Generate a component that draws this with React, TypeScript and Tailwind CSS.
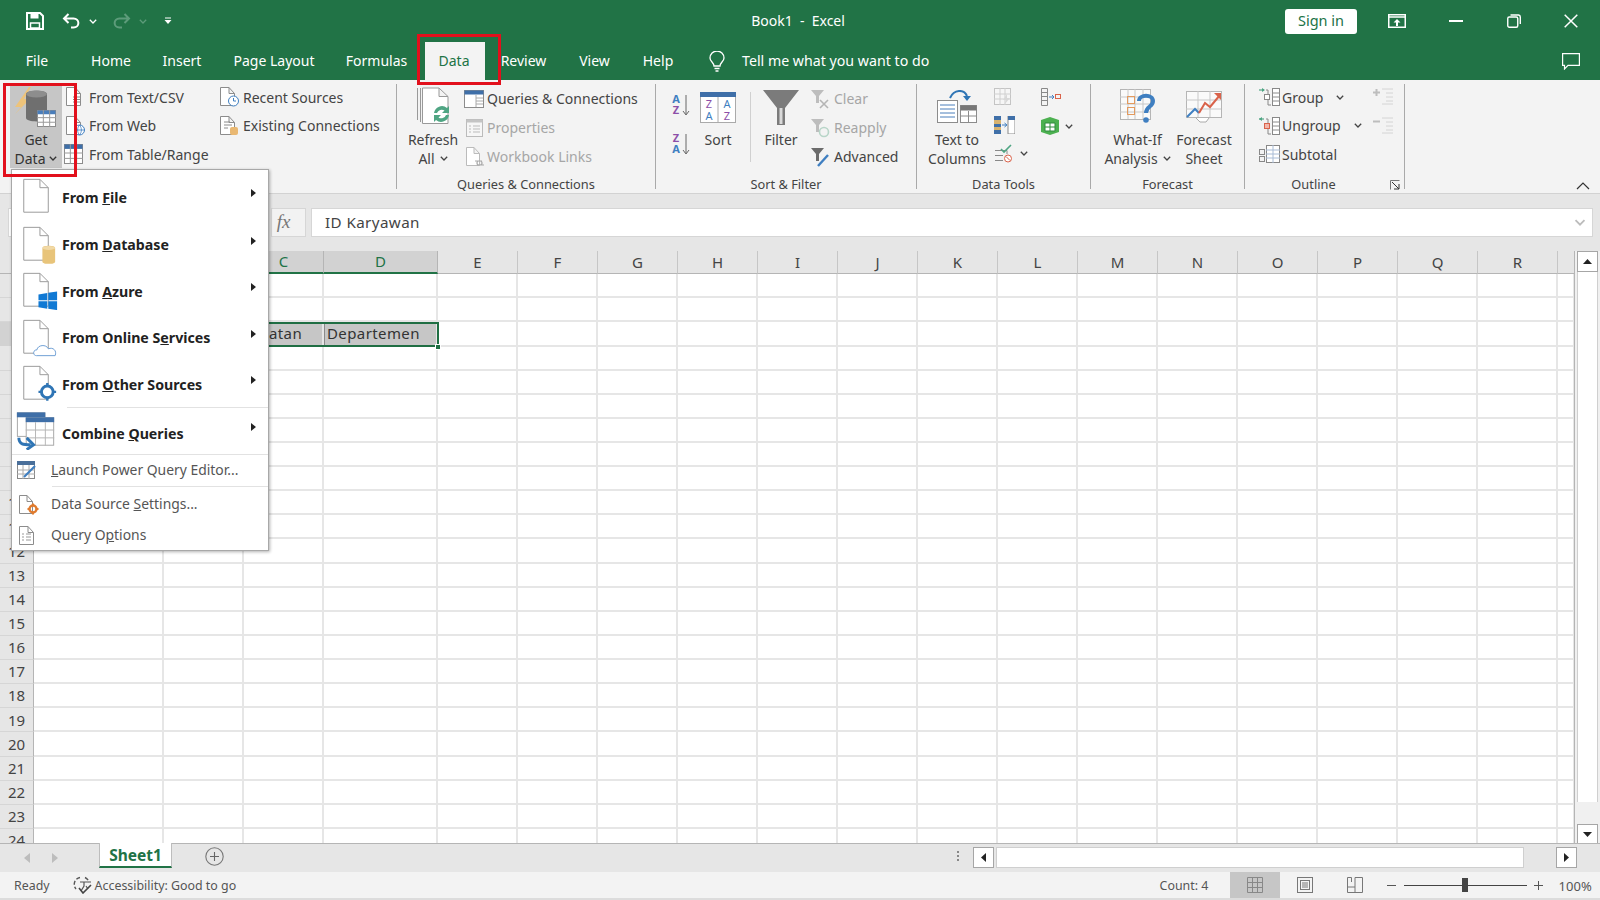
import type { ReactNode } from 'react';

const FONT = "font-['Noto_Sans','Open_Sans',sans-serif]";
const COLS = 'grid grid-cols-[34px_130px_80px_80px_114px_repeat(14,80px)_17px]';
const HEADS = ['', 'A', 'B', 'C', 'D', 'E', 'F', 'G', 'H', 'I', 'J', 'K', 'L', 'M', 'N', 'O', 'P', 'Q', 'R', ''];
const ROWS = Array.from({ length: 24 }, (_, i) => i + 1);

function Chevron({ className = '', color = '#444' }: { className?: string; color?: string }) {
  return (
    <svg width="8" height="5" viewBox="0 0 8 5" className={className}>
      <path d="M0.8 0.8L4 4L7.2 0.8" fill="none" stroke={color} strokeWidth="1.3" />
    </svg>
  );
}

function Arrow() {
  return (
    <svg width="5" height="8" viewBox="0 0 5 8" className="mt-[-8px] mr-[12px] shrink-0">
      <path d="M0 0L5 4L0 8Z" fill="#222" />
    </svg>
  );
}

function DocBase({ w = 18, h = 20, stroke = '#8c8c8c' }: { w?: number; h?: number; stroke?: string }) {
  return <path d={`M0.5 0.5H${w - 6}L${w - 0.5} 6.5V${h - 0.5}H0.5Z M${w - 6} 0.5V6.5H${w - 0.5}`} fill="#fff" stroke={stroke} strokeWidth="1" />;
}

function SmallDoc({ children }: { children?: ReactNode }) {
  return (
    <svg width="20" height="20" viewBox="0 0 20 20" className="shrink-0">
      <g transform="translate(0,0)"><DocBase w={15} h={19} /></g>
      {children}
    </svg>
  );
}

function MiniTable({ x = 0, y = 0, w = 18, h = 18, head = '#4a7ebb' }: { x?: number; y?: number; w?: number; h?: number; head?: string }) {
  const c = [w / 3, (2 * w) / 3];
  const r = [h * 0.45, h * 0.72];
  return (
    <g transform={`translate(${x},${y})`}>
      <rect x="0.5" y="0.5" width={w - 1} height={h - 1} fill="#fff" stroke="#8c8c8c" />
      <rect x="0.5" y="0.5" width={w - 1} height={h * 0.22} fill={head} />
      {c.map((v) => <path key={v} d={`M${v} 0V${h}`} stroke="#9a9a9a" />)}
      {r.map((v) => <path key={v} d={`M0 ${v}H${w}`} stroke="#9a9a9a" />)}
    </g>
  );
}

function GetDataIcon() {
  return (
    <svg width="50" height="44" viewBox="0 0 50 44" className="shrink-0">
      <path d="M19 2L5 22H11L5 29L20 14H14L21 2Z" fill="#edc37a" />
      <path d="M16 9C16 4.5 37 4.5 37 9V33C37 37.5 16 37.5 16 33Z" fill="#6f6f6f" />
      <ellipse cx="26.5" cy="9" rx="10.5" ry="3.5" fill="#8d8d8d" />
      <MiniTable x={27} y={25} w={19} h={17} head="#4a7ebb" />
    </svg>
  );
}

function SmallRow({ icon, label, gray, h = 'h-[28.5px]' }: { icon: ReactNode; label: string; gray?: boolean; h?: string }) {
  return (
    <div className={`flex items-center ${h}`}>
      <div className="w-[23px] flex items-center shrink-0">{icon}</div>
      <span className={`text-[14px] whitespace-nowrap ${gray ? 'text-[#a6a6a6]' : 'text-[#444]'}`}>{label}</span>
    </div>
  );
}

function Group({ w, label, pr, children }: { w: string; label: string; pr?: string; children: ReactNode }) {
  return (
    <div className={`flex flex-col h-[105px] shrink-0 border-r border-[#a9a9a9] ${w}`}>
      <div className="flex h-[91px] shrink-0">{children}</div>
      <div className={`h-[18px] shrink-0 text-center text-[12.8px] leading-[18px] text-[#444] whitespace-nowrap ${pr ?? ''}`}>{label}</div>
    </div>
  );
}

function BigButton({ w, icon, line1, line2, chevron }: { w: string; icon: ReactNode; line1: string; line2?: string; chevron?: boolean }) {
  return (
    <div className={`flex flex-col items-center shrink-0 ${w}`}>
      <div className="h-[46px] flex items-center justify-center">{icon}</div>
      <div className="text-[14px] leading-[19px] text-[#444] whitespace-nowrap text-center">{line1}</div>
      {line2 && (
        <div className="text-[14px] leading-[19px] text-[#444] whitespace-nowrap flex items-center gap-[5px]">
          {line2}
          {chevron && <Chevron />}
        </div>
      )}
    </div>
  );
}

function TitleBar() {
  return (
    <div className="grid grid-cols-[1fr_auto_1fr] items-center h-[42px] text-white">
      <div className="flex items-center pl-[26px]">
        <svg width="18" height="18" viewBox="0 0 18 18">
          <path d="M1 1H14L17 4V17H1Z" fill="none" stroke="#fff" strokeWidth="2" />
          <rect x="4.5" y="1.5" width="8" height="5" fill="#fff" />
          <rect x="4.5" y="11" width="9" height="5" fill="none" stroke="#fff" strokeWidth="1.5" />
        </svg>
        <svg width="19" height="18" viewBox="0 0 19 18" className="ml-[18px]">
          <path d="M6.5 2L2 6.5L6.5 11M2 6.5H11.5C18 6.5 18 15.5 11.5 15.5H9" fill="none" stroke="#fff" strokeWidth="2" />
        </svg>
        <Chevron className="ml-[8px]" color="#fff" />
        <svg width="19" height="18" viewBox="0 0 19 18" className="ml-[15px]">
          <path d="M12.5 2L17 6.5L12.5 11M17 6.5H7.5C1 6.5 1 15.5 7.5 15.5H10" fill="none" stroke="#5d9b7a" strokeWidth="2" />
        </svg>
        <Chevron className="ml-[8px]" color="#5d9b7a" />
        <svg width="8" height="8" viewBox="0 0 8 8" className="ml-[17px]">
          <path d="M1 1H7" stroke="#fff" /><path d="M0.5 3H7.5L4 7Z" fill="#fff" />
        </svg>
      </div>
      <div className="text-[14px] whitespace-pre pb-[2px] pr-[4px]">Book1  -  Excel</div>
      <div className="flex items-center justify-end">
        <div className="w-[72px] h-[25px] rounded-[3px] bg-white text-[#217346] text-[14.5px] flex items-center justify-center">Sign in</div>
        <svg width="18" height="14" viewBox="0 0 18 14" className="ml-[31px]">
          <rect x="0.75" y="0.75" width="16.5" height="12.5" fill="none" stroke="#fff" strokeWidth="1.5" />
          <path d="M1 3H17" stroke="#fff" strokeWidth="1.5" />
          <path d="M9 5L5.5 8.5H8V12H10V8.5H12.5Z" fill="#fff" />
        </svg>
        <div className="w-[14px] h-[1.5px] bg-white ml-[43px]" />
        <svg width="14" height="14" viewBox="0 0 14 14" className="ml-[44px]">
          <rect x="0.75" y="3" width="10" height="10.25" rx="1.5" fill="none" stroke="#fff" strokeWidth="1.4" />
          <path d="M3.5 1H11.5A2 2 0 0 1 13.3 3V10" fill="none" stroke="#fff" strokeWidth="1.4" />
        </svg>
        <svg width="14" height="14" viewBox="0 0 14 14" className="ml-[43px] mr-[22px]">
          <path d="M0.7 0.7L13.3 13.3M13.3 0.7L0.7 13.3" stroke="#fff" strokeWidth="1.5" />
        </svg>
      </div>
    </div>
  );
}

function TabsRow() {
  return (
    <div className="flex items-end h-[38px] text-white text-[14px]">
      <div className="w-[74px] h-[38px] flex items-center justify-center pb-[2px]">File</div>
      <div className="w-[74px] h-[38px] flex items-center justify-center pb-[2px]">Home</div>
      <div className="w-[68px] h-[38px] flex items-center justify-center pb-[2px]">Insert</div>
      <div className="w-[116px] h-[38px] flex items-center justify-center pb-[2px]">Page Layout</div>
      <div className="w-[89px] h-[38px] flex items-center justify-center pb-[2px]">Formulas</div>
      <div className="ml-[4px] w-[60px] h-[38px] flex items-center justify-center bg-[#f3f3f3] text-[#217346] pb-[2px] pr-[2px]">Data</div>
      <div className="w-[77px] h-[38px] flex items-center justify-center pb-[2px]">Review</div>
      <div className="w-[65px] h-[38px] flex items-center justify-center pb-[2px]">View</div>
      <div className="w-[62px] h-[38px] flex items-center justify-center pb-[2px]">Help</div>
      <div className="h-[38px] flex items-center ml-[20px]">
        <svg width="16" height="21" viewBox="0 0 16 21">
          <path d="M5 15C5 11.5 1 10.5 1 7A7 7 0 0 1 15 7C15 10.5 11 11.5 11 15Z" fill="none" stroke="#fff" strokeWidth="1.3" />
          <path d="M5.5 17.5H10.5M6.5 20H9.5" stroke="#fff" strokeWidth="1.3" />
        </svg>
      </div>
      <div className="h-[38px] flex items-center ml-[17px] text-[14.2px] pb-[1px]">Tell me what you want to do</div>
      <div className="h-[38px] flex items-center ml-auto mr-[20px]">
        <svg width="18" height="17" viewBox="0 0 18 17">
          <path d="M0.6 0.6H17.4V12.4H6L2.5 16V12.4H0.6Z" fill="none" stroke="#fff" strokeWidth="1.2" />
        </svg>
      </div>
    </div>
  );
}

function IconCsv() {
  return <SmallDoc><path d="M7 10H14M7 12.5H14M7 15H14" stroke="#8c8c8c" /></SmallDoc>;
}
function IconWeb() {
  return <SmallDoc><circle cx="13.5" cy="14" r="5" fill="#fff" stroke="#3f7fc1" /><path d="M8.5 14H18.5M13.5 9C11 12 11 16 13.5 19C16 16 16 12 13.5 9" fill="none" stroke="#3f7fc1" strokeWidth="0.8" /></SmallDoc>;
}
function IconTable() {
  return <svg width="20" height="21" viewBox="0 0 20 21" className="shrink-0 ml-[-2px]"><MiniTable w={19} h={20} head="#3f6fa8" /></svg>;
}
function IconRecent() {
  return <SmallDoc><circle cx="13.5" cy="14" r="5" fill="#fff" stroke="#3f7fc1" /><path d="M13.5 11V14H16" fill="none" stroke="#3f7fc1" /></SmallDoc>;
}
function IconExisting() {
  return <SmallDoc><path d="M4 6H10M4 9H12M4 12H8" stroke="#8c8c8c" /><rect x="10" y="11" width="8" height="8" rx="2" fill="#e9b872" /></SmallDoc>;
}

function Ribbon() {
  return (
    <div className="flex h-[114px] bg-[#f3f3f3] border-b border-[#d2d2d2] pt-[4px] relative">
      <Group w="w-[397px]" label="">
        <div className="ml-[10px] w-[52px] h-[84px] bg-[#c6c6c6] flex flex-col items-center shrink-0">
          <div className="h-[47px] w-full flex items-center">
            <GetDataIcon />
          </div>
          <div className="text-[14px] leading-[19px] text-[#333]">Get</div>
          <div className="text-[14px] leading-[19px] text-[#333] flex items-center gap-[4px]">Data <Chevron color="#333" /></div>
        </div>
        <div className="ml-[4px] w-[154px] shrink-0 mt-[-1px]">
          <SmallRow icon={<IconCsv />} label="From Text/CSV" />
          <SmallRow icon={<IconWeb />} label="From Web" />
          <SmallRow icon={<IconTable />} label="From Table/Range" />
        </div>
        <div className="shrink-0 mt-[-1px]">
          <SmallRow icon={<IconRecent />} label="Recent Sources" />
          <SmallRow icon={<IconExisting />} label="Existing Connections" />
        </div>
      </Group>
      <Group w="w-[259px]" label="Queries & Connections">
        <BigButton
          w="w-[72px]"
          icon={
            <svg width="38" height="40" viewBox="0 0 38 40">
              <path d="M3.5 1V33" stroke="#999" /><path d="M6.5 1V35" stroke="#999" />
              <g transform="translate(8,0.5)"><path d="M0.5 0.5H17L26 9V36H0.5Z M17 0.5V9H26" fill="#fff" stroke="#999" /></g>
              <path d="M20 26A8 8 0 0 1 33 21L35 19V26H28L30.5 23.5A5 5 0 0 0 23 26ZM35 28A8 8 0 0 1 22 33L20 35V28H27L24.5 30.5A5 5 0 0 0 32 28Z" fill="#4fa583" />
            </svg>
          }
          line1="Refresh"
          line2="All"
          chevron
        />
        <div className="ml-[-5px] shrink-0">
          <SmallRow h="h-[29px]" icon={<svg width="20" height="18" viewBox="0 0 20 18"><rect x="0.5" y="0.5" width="19" height="17" fill="#fff" stroke="#8c8c8c" /><rect x="0.5" y="0.5" width="19" height="4" fill="#3f6fa8" /><path d="M12 5V17M12 8H19M12 11H19M12 14H19" stroke="#aaa" /></svg>} label="Queries & Connections" />
          <SmallRow gray h="h-[29px]" icon={<svg width="18" height="18" viewBox="0 0 18 18" className="ml-[2px]"><rect x="0.5" y="0.5" width="16" height="17" fill="#f6f6f6" stroke="#bbb" /><rect x="0.5" y="0.5" width="16" height="3" fill="#c4c4c4" /><path d="M3 7H5M7 7H14M3 10H5M7 10H14M3 13H5M7 13H14" stroke="#bbb" /></svg>} label="Properties" />
          <SmallRow gray h="h-[29px]" icon={<svg width="20" height="20" viewBox="0 0 20 20" className="ml-[2px]"><DocBase w={14} h={19} stroke="#bbb" /><path d="M8 14H13A2 2 0 0 1 13 18H10M17 18H12A2 2 0 0 1 12 14H15" fill="none" stroke="#aaa" strokeWidth="1.2" transform="translate(1,0)" /></svg>} label="Workbook Links" />
        </div>
      </Group>
      <Group w="w-[261px]" label="Sort & Filter">
        <div className="ml-[15px] w-[24px] shrink-0 flex flex-col">
          <SortAZ first="A" second="Z" />
          <SortAZ first="Z" second="A" />
        </div>
        <BigButton
          w="w-[40px] ml-[3px]"
          icon={
            <svg width="36" height="31" viewBox="0 0 36 31">
              <rect x="0.5" y="0.5" width="35" height="30" fill="#fff" stroke="#aaa" />
              <rect x="0" y="0" width="36" height="5" fill="#3f6fa8" />
              <path d="M18 5V31" stroke="#aaa" />
              <text x="9" y="16" textAnchor="middle" fontSize="11" fill="#8c4fa8">Z</text>
              <text x="9" y="28" textAnchor="middle" fontSize="11" fill="#3f7fc1">A</text>
              <text x="27" y="16" textAnchor="middle" fontSize="11" fill="#3f7fc1">A</text>
              <text x="27" y="28" textAnchor="middle" fontSize="11" fill="#8c4fa8">Z</text>
            </svg>
          }
          line1="Sort"
        />
        <div className="ml-[12px] mt-[8px] w-px h-[70px] bg-[#d0d0d0] shrink-0" />
        <BigButton
          w="w-[40px] ml-[10px]"
          icon={
            <svg width="36" height="36" viewBox="0 0 36 36">
              <path d="M0 1H36L22 19V36H14V19Z" fill="#7b7b7b" />
              <path d="M16.5 19V35H19.5V19Z" fill="#d9d9d9" />
            </svg>
          }
          line1="Filter"
        />
        <div className="ml-[10px] shrink-0">
          <SmallRow gray h="h-[29px]" icon={<svg width="20" height="20" viewBox="0 0 20 20"><path d="M0 1H13L8 7V14H5V7Z" fill="#bdbdbd" /><path d="M9 11L17 19M17 11L9 19" stroke="#b5b5b5" strokeWidth="1.6" /></svg>} label="Clear" />
          <SmallRow gray h="h-[29px]" icon={<svg width="20" height="20" viewBox="0 0 20 20"><path d="M0 1H13L8 7V14H5V7Z" fill="#bdbdbd" /><circle cx="13" cy="14" r="4.5" fill="none" stroke="#b8d5c8" strokeWidth="1.6" /></svg>} label="Reapply" />
          <SmallRow h="h-[29px]" icon={<svg width="20" height="20" viewBox="0 0 20 20"><path d="M0 1H13L8 7V14H5V7Z" fill="#6b6b6b" /><path d="M7 19L17 8" stroke="#3f7fc1" strokeWidth="2.4" /></svg>} label="Advanced" />
        </div>
      </Group>
      <Group w="w-[174px]" label="Data Tools">
        <BigButton
          w="w-[80px]"
          icon={
            <svg width="40" height="34" viewBox="0 0 40 34">
              <path d="M13 8C17 -1 27 -1 30 6" fill="none" stroke="#2f75b5" strokeWidth="2" />
              <path d="M26 6H34L30 11Z" fill="#2f75b5" />
              <rect x="0.5" y="10.5" width="20" height="22" fill="#fff" stroke="#8c8c8c" />
              <path d="M3 15H18M3 19H18M3 23H18M3 27H18" stroke="#4a7ebb" />
              <rect x="23.5" y="15.5" width="16" height="17" fill="#fff" stroke="#8c8c8c" />
              <rect x="23.5" y="15.5" width="16" height="5" fill="#777" />
              <path d="M31.5 21V32M24 26H39" stroke="#8c8c8c" />
            </svg>
          }
          line1="Text to"
          line2="Columns"
        />
        <div className="ml-[-3px] w-[32px] shrink-0 flex flex-col items-start pt-[4px] gap-[10px]">
          <svg width="19" height="18" viewBox="0 0 19 18"><rect x="0.5" y="0.5" width="16" height="16" fill="#f6f6f6" stroke="#c4c4c4" /><path d="M0 6H17M0 11H17M6 0V17M11 0V17" stroke="#d0d0d0" /><path d="M13 6L9 12H12L10 17L16 10H13Z" fill="#d8d8d8" /></svg>
          <svg width="21" height="18" viewBox="0 0 21 18"><rect x="0" y="0" width="7" height="18" fill="#d8b26e" /><rect x="0" y="0" width="7" height="4" fill="#3f6fa8" /><rect x="0" y="8" width="7" height="3" fill="#3f6fa8" /><rect x="0" y="14" width="7" height="4" fill="#3f6fa8" /><rect x="14" y="0" width="7" height="18" fill="#fff" stroke="#888" /><rect x="14" y="0" width="7" height="4" fill="#3f6fa8" /><path d="M8 9H12M10.5 7L13 9L10.5 11" fill="none" stroke="#3f7fc1" /></svg>
          <div className="flex items-center gap-[6px]">
            <svg width="20" height="19" viewBox="0 0 20 19"><path d="M1 6.5H13V10M1 11.5H9M1 16.5H9" fill="none" stroke="#888" /><path d="M7 5L10 8L17 1" fill="none" stroke="#4fa583" strokeWidth="1.6" /><circle cx="14" cy="14.5" r="3.5" fill="#fff" stroke="#d9634b" /><path d="M12 12.5L16 16.5" stroke="#d9634b" /></svg>
            <Chevron />
          </div>
        </div>
        <div className="ml-[15px] shrink-0 flex flex-col pt-[4px] gap-[11px]">
          <svg width="20" height="18" viewBox="0 0 20 18"><path d="M0.5 0.5H6.5V17.5H0.5ZM0.5 4.5H6.5M0.5 8.5H6.5M0.5 12.5H6.5" fill="none" stroke="#888" /><path d="M8 9H12" stroke="#3f7fc1" /><path d="M11 7L13 9L11 11" fill="none" stroke="#3f7fc1" /><rect x="14.5" y="6.5" width="5" height="4" fill="none" stroke="#d9634b" /></svg>
          <div className="flex items-center gap-[5px]">
            <svg width="19" height="18" viewBox="0 0 19 18"><path d="M9 0L18 3V15L9 18L0 15V3Z" fill="#4cb050" /><path d="M4 6H14V14H4ZM9 6V14M4 10H14" fill="#fff" stroke="#2e8b3d" /></svg>
            <Chevron />
          </div>
        </div>
      </Group>
      <Group w="w-[154px]" label="Forecast">
        <BigButton
          w="w-[95px] ml-[-1px]"
          icon={
            <svg width="36" height="36" viewBox="0 0 36 36">
              <rect x="0.5" y="0.5" width="30" height="30" fill="#fafafa" stroke="#b5b5b5" />
              <path d="M8 0V30M15 0V30M23 0V30M0 8H30M0 15H30M0 23H30" stroke="#c8c8c8" />
              <rect x="7.5" y="7.5" width="7" height="7" fill="none" stroke="#e39a5e" />
              <rect x="7.5" y="18.5" width="7" height="7" fill="none" stroke="#e39a5e" />
              <path d="M19 12C19 5 33 5 33 12C33 18 26 17 26 24" fill="none" stroke="#3f7fc1" strokeWidth="4" />
              <circle cx="26" cy="31" r="2.8" fill="#3f7fc1" />
            </svg>
          }
          line1="What-If"
          line2="Analysis"
          chevron
        />
        <BigButton
          w="w-[46px] ml-[-4px]"
          icon={
            <svg width="36" height="32" viewBox="0 0 36 32">
              <rect x="0.5" y="0.5" width="35" height="26" fill="#fafafa" stroke="#b5b5b5" />
              <path d="M12 0V26M24 0V26M0 9H35M0 18H35" stroke="#c8c8c8" />
              <path d="M1 26L9 18L13 22" fill="none" stroke="#3f7fc1" strokeWidth="2" />
              <path d="M13 22L19 12L24 16L34 4" fill="none" stroke="#d9634b" strokeWidth="2" />
              <path d="M28 2H35V9Z" fill="#d9634b" />
              <path d="M10 27L14 31H20L23 27" fill="#fff" stroke="#aaa" />
            </svg>
          }
          line1="Forecast"
          line2="Sheet"
        />
      </Group>
      <Group w="w-[160px]" label="Outline" pr="pr-[22px]">
        <div className="ml-[14px] shrink-0 mt-[-1px]">
          <div className="flex items-center h-[28.5px]">
            <OutlineIcon arrow="#4fa583" />
            <span className="text-[14px] text-[#444] ml-[2px]">Group</span>
            <Chevron className="ml-[13px]" />
          </div>
          <div className="flex items-center h-[28.5px]">
            <OutlineIcon arrow="#4fa583" red />
            <span className="text-[14px] text-[#444] ml-[2px]">Ungroup</span>
            <Chevron className="ml-[13px]" />
          </div>
          <div className="flex items-center h-[28.5px]">
            <svg width="21" height="18" viewBox="0 0 21 18"><rect x="0.5" y="4.5" width="5" height="5" fill="none" stroke="#888" /><rect x="0.5" y="11.5" width="5" height="5" fill="none" stroke="#888" /><rect x="7.5" y="0.5" width="13" height="17" fill="#fff" stroke="#888" /><path d="M7 5H21M7 9H21M7 13H21M14 0V18" stroke="#a9bcd6" /></svg>
            <span className="text-[14px] text-[#444] ml-[2px]">Subtotal</span>
          </div>
        </div>
        <div className="ml-auto mr-[11px] pt-[4px] flex flex-col gap-[12px] shrink-0">
          <GroupMark sign="+" />
          <GroupMark sign="-" />
        </div>
      </Group>
      <svg width="10" height="10" viewBox="0 0 10 10" className="absolute left-[1390px] top-[100px]">
        <path d="M0.5 9.5V0.5H9.5" fill="none" stroke="#777" />
        <path d="M2 2L9 9M9 4V9H4" fill="none" stroke="#333" />
      </svg>
      <svg width="14" height="8" viewBox="0 0 14 8" className="absolute left-[1576px] top-[102px]">
        <path d="M1 7L7 1L13 7" fill="none" stroke="#333" strokeWidth="1.2" />
      </svg>
    </div>
  );
}

function SortAZ({ first, second }: { first: string; second: string }) {
  const firstColor = first === 'A' ? '#3f7fc1' : '#8c4fa8';
  const secondColor = second === 'A' ? '#3f7fc1' : '#8c4fa8';
  return (
    <svg width="20" height="24" viewBox="0 0 20 24" className="mt-[9px] mb-[6px]">
      <text x="5" y="10" textAnchor="middle" fontSize="11" fontWeight="700" fill={firstColor}>{first}</text>
      <text x="5" y="21" textAnchor="middle" fontSize="11" fontWeight="700" fill={secondColor}>{second}</text>
      <path d="M15 2V21M12 18L15 22L18 18" fill="none" stroke="#666" />
    </svg>
  );
}

function OutlineIcon({ arrow, red }: { arrow: string; red?: boolean }) {
  return (
    <svg width="21" height="20" viewBox="0 0 21 20" className="shrink-0">
      <path d="M0 3H5" stroke={arrow} strokeWidth="1.2" />
      <path d={red ? 'M0 3L3 1V5Z' : 'M6 3L3 1V5Z'} fill={arrow} />
      <path d="M7 3H9V18H12" fill="none" stroke="#888" />
      <rect x="5.5" y="7.5" width="5" height="5" fill={red ? '#f2b6aa' : '#fff'} stroke={red ? '#d9634b' : '#888'} />
      <rect x="13.5" y="1.5" width="7" height="17" fill="#fff" stroke="#888" />
      <path d="M13 6H21M13 10H21M13 14H21" stroke="#8c8c8c" />
    </svg>
  );
}

function GroupMark({ sign }: { sign: '+' | '-' }) {
  return (
    <svg width="20" height="17" viewBox="0 0 20 17">
      <path d={sign === '+' ? 'M0 4.5H7M3.5 1V8' : 'M0 4.5H7'} stroke="#bdbdbd" strokeWidth="2" />
      <path d="M9 1H20M13 5H20M13 9H20M13 13H20M9 16H20" stroke="#d4d4d4" />
    </svg>
  );
}

function FormulaBar() {
  return (
    <div className="flex h-[57px] bg-[#e6e6e6] pt-[14px] pl-[8px] pr-[7px]">
      <div className="w-[240px] h-[29px] bg-white border border-[#d6d6d6] shrink-0" />
      <div className="ml-[23px] w-[35px] h-[29px] bg-[#f2f2f2] border border-[#d6d6d6] shrink-0 flex items-center justify-center pr-[10px] font-['Liberation_Serif',serif] italic text-[19px] text-[#777]">fx</div>
      <div className="ml-[5px] flex-1 h-[29px] bg-white border border-[#d6d6d6] flex items-center pl-[13px] pr-[6px] text-[15.2px] tracking-[0.4px] text-[#444]">
        ID Karyawan
        <Chevron className="ml-auto w-[12px] h-[7px]" color="#bcbcbc" />
      </div>
    </div>
  );
}

function Sheet() {
  return (
    <div className="flex h-[592px] bg-white overflow-hidden">
      <div className="w-[1575px] shrink-0 relative overflow-hidden border-r border-[#b5b5b5]">
        <div className={`${COLS} h-[23px] bg-[#e6e6e6]`}>
          {HEADS.map((h, i) => {
            const on = ['A', 'B', 'C', 'D'].includes(h);
            return (
              <div
                key={i}
                className={`h-[23px] flex items-center justify-center text-[15px] border-r border-b ${on ? 'bg-[#d2d2d2] text-[#217346] border-b-2 border-b-[#217346] border-r-[#b5b5b5]' : 'text-[#444] border-r-[#c6c6c6] border-b-[#b5b5b5]'}`}
              >
                {h}
              </div>
            );
          })}
        </div>
        {ROWS.map((r) => (
          <div key={r} className={`${COLS} h-[24.14px]`}>
            {HEADS.map((h, i) => (
              <div
                key={i}
                className={
                  i === 0
                    ? `flex items-center justify-center text-[15px] border-r border-b border-r-[#b5b5b5] border-b-[#d6d6d6] ${r === 3 ? 'bg-[#d2d2d2]' : 'bg-[#e6e6e6]'} text-[#444]`
                    : `flex items-center overflow-visible whitespace-nowrap text-[15px] tracking-[0.4px] text-[#333] pl-[2px] border-r-2 border-b-2 border-[#e6e6e6] ${r === 3 && i <= 4 ? 'bg-[#c6c6c6] border-[#c6c6c6]' : ''} ${r === 3 && i === 4 ? 'border-l border-l-[#8a8a8a]' : ''}`
                }
              >
                {i === 0 ? r : r === 3 && h === 'C' ? 'Jabatan' : r === 3 && h === 'D' ? 'Departemen' : ''}
              </div>
            ))}
          </div>
        ))}
        <div className="absolute left-[34px] top-[71px] w-[405px] h-[25px] border-2 border-[#1f6e43]" />
        <div className="absolute left-[435px] top-[93px] w-[6px] h-[6px] bg-[#1f6e43] border border-white" />
      </div>
      <div className="flex-1 bg-[#f0f0f0] flex flex-col items-center">
        <div className="w-[21px] h-[21px] bg-white border border-[#a6a6a6] flex items-center justify-center shrink-0">
          <svg width="9" height="5" viewBox="0 0 9 5"><path d="M0 5L4.5 0L9 5Z" fill="#222" /></svg>
        </div>
        <div className="w-[21px] h-[530px] bg-white border-x border-[#cfcfcf] shrink-0" />
        <div className="w-[21px] h-[20px] mt-auto mb-[-1px] bg-white border border-[#a6a6a6] flex items-center justify-center shrink-0">
          <svg width="9" height="5" viewBox="0 0 9 5"><path d="M0 0L4.5 5L9 0Z" fill="#222" /></svg>
        </div>
      </div>
    </div>
  );
}

function SheetTabs() {
  return (
    <div className="h-[29px] bg-[#e6e6e6] border-t border-[#b5b5b5] flex items-start">
      <svg width="6" height="10" viewBox="0 0 6 10" className="ml-[24px] mt-[9px]"><path d="M6 0L0 5L6 10Z" fill="#bdbdbd" /></svg>
      <svg width="6" height="10" viewBox="0 0 6 10" className="ml-[22px] mt-[9px]"><path d="M0 0L6 5L0 10Z" fill="#bdbdbd" /></svg>
      <div className="ml-[41px] w-[73px] h-[25px] bg-white border-b-2 border-[#217346] border-x border-x-[#bdbdbd] flex items-center justify-center text-[15.5px] font-bold text-[#217346] shrink-0 mt-[-1px] pt-[2px]">Sheet1</div>
      <svg width="19" height="19" viewBox="0 0 19 19" className="ml-[33px] mt-[3px]">
        <circle cx="9.5" cy="9.5" r="8.7" fill="none" stroke="#777" strokeWidth="1.1" />
        <path d="M9.5 5V14M5 9.5H14" stroke="#666" strokeWidth="1.1" />
      </svg>
      <div className="ml-[733px] mt-[7px] flex flex-col gap-[2px] shrink-0">
        <div className="w-[2px] h-[2px] bg-[#888]" />
        <div className="w-[2px] h-[2px] bg-[#888]" />
        <div className="w-[2px] h-[2px] bg-[#888]" />
      </div>
      <div className="ml-[14px] mt-[3px] flex h-[21px] shrink-0">
        <div className="w-[21px] h-[21px] bg-white border border-[#a6a6a6] flex items-center justify-center">
          <svg width="5" height="9" viewBox="0 0 5 9"><path d="M5 0L0 4.5L5 9Z" fill="#222" /></svg>
        </div>
        <div className="ml-[2px] w-[528px] h-[21px] bg-white border border-[#cfcfcf]" />
        <div className="ml-[32px] w-[21px] h-[21px] bg-white border border-[#a6a6a6] flex items-center justify-center">
          <svg width="5" height="9" viewBox="0 0 5 9"><path d="M0 0L5 4.5L0 9Z" fill="#222" /></svg>
        </div>
      </div>
    </div>
  );
}

function StatusBar() {
  return (
    <div className="h-[28px] bg-[#f3f3f3] flex items-center text-[12.4px] text-[#555] border-b-2 border-[#dcdcdc]">
      <span className="ml-[14px] pt-[3px]">Ready</span>
      <svg width="19" height="18" viewBox="0 0 19 18" className="ml-[23px]">
        <path d="M7 1.5A7 7 0 0 0 3 13M12 1.5A7 7 0 0 1 16 6" fill="none" stroke="#555" strokeWidth="1.4" strokeDasharray="4 2" />
        <path d="M7 6H18M11 6V10L8 15M13 10L15 13" fill="none" stroke="#555" strokeWidth="1.2" />
        <path d="M6 12L10 17L18 9" fill="none" stroke="#444" strokeWidth="1.6" />
      </svg>
      <span className="ml-[3px] w-[140px] whitespace-nowrap pt-[3px]">Accessibility: Good to go</span>
      <span className="ml-[925px] w-[70px] whitespace-nowrap pt-[3px]">Count: 4</span>
      <div className="w-[50px] h-[26px] bg-[#c6c6c6] flex items-center justify-center shrink-0">
        <svg width="16" height="16" viewBox="0 0 16 16"><path d="M0.5 0.5H15.5V15.5H0.5ZM5.5 0V16M10.5 0V16M0 5.5H16M0 10.5H16" fill="none" stroke="#888" /></svg>
      </div>
      <svg width="16" height="16" viewBox="0 0 16 16" className="ml-[17px]"><rect x="0.5" y="0.5" width="15" height="15" fill="none" stroke="#777" /><rect x="3.5" y="3.5" width="9" height="9" fill="none" stroke="#777" /><path d="M5 6H11M5 8H11M5 10H11" stroke="#777" /></svg>
      <svg width="16" height="16" viewBox="0 0 16 16" className="ml-[34px]"><path d="M0.5 5V15.5H15.5V0.5H8V10H0.5M8 10V15.5M0.5 5V0.5H4.5V5" fill="none" stroke="#777" /></svg>
      <div className="ml-[24px] w-[9px] h-px bg-[#555]" />
      <div className="ml-[8px] w-[123px] h-px bg-[#444] relative shrink-0">
        <div className="absolute left-[58px] top-[-7px] w-[6px] h-[14px] bg-[#444]" />
      </div>
      <div className="ml-[7px] relative w-[9px] h-[9px] shrink-0">
        <div className="absolute left-0 top-[4px] w-[9px] h-px bg-[#555]" />
        <div className="absolute left-[4px] top-0 w-px h-[9px] bg-[#555]" />
      </div>
      <span className="ml-[16px] whitespace-nowrap text-[13px] pt-[3px]">100%</span>
    </div>
  );
}

function MenuRow({ h, icon, children, arrow = true, pt, bold = true }: { h: string; icon: ReactNode; children: ReactNode; arrow?: boolean; pt?: string; bold?: boolean }) {
  return (
    <div className={`flex items-center justify-between ${h}`}>
      <div className={`flex items-center ${pt ?? ''}`}>
        {icon}
        <span className={bold ? 'text-[14.2px] font-bold text-[#222]' : 'text-[13.9px] text-[#555]'}>{children}</span>
      </div>
      {arrow && <Arrow />}
    </div>
  );
}

function MenuDoc({ children }: { children?: ReactNode }) {
  return (
    <svg width="50" height="38" viewBox="0 0 51 38" className="shrink-0">
      <g transform="translate(11.5,0.5)">
        <path d="M0.5 0.5H17L25.5 9V34H0.5Z M17 0.5V9H25.5" fill="#fff" stroke="#9a9a9a" />
      </g>
      {children}
    </svg>
  );
}

function GetDataMenu() {
  return (
    <div className="absolute left-[11px] top-[169px] w-[258px] h-[382px] bg-white border border-[#a8a8a8] shadow-[1px_1px_3px_rgba(0,0,0,0.3)] pt-[4px]">
      <MenuRow h="h-[46.6px] mb-[1px]" icon={<MenuDoc />}>From <u>F</u>ile</MenuRow>
      <MenuRow h="h-[46.6px]" icon={
        <MenuDoc>
          <path d="M31 22C31 19 44 19 44 22V36C44 39 31 39 31 36Z" fill="#e8c47a" />
          <ellipse cx="37.5" cy="22" rx="6.5" ry="2" fill="#f1d9a6" />
        </MenuDoc>
      }>From <u>D</u>atabase</MenuRow>
      <MenuRow h="h-[46.6px]" icon={
        <MenuDoc>
          <path d="M27 22.5L36 21V28.5H27ZM37 20.8L46 19.5V28.5H37ZM27 29.5H36V37L27 35.5ZM37 29.5H46V38.5L37 37.2Z" fill="#1079d4" />
        </MenuDoc>
      }>From <u>A</u>zure</MenuRow>
      <MenuRow h="h-[46.6px]" icon={
        <MenuDoc>
          <path d="M25 37C21 37 21 31 25.5 31C26 26 35 25 37 30C42 28 46 32 44 37Z" fill="#fff" stroke="#6d9ed4" />
        </MenuDoc>
      }>From Online S<u>e</u>rvices</MenuRow>
      <MenuRow h="h-[46px]" icon={
        <MenuDoc>
          <circle cx="36" cy="27" r="6" fill="#fff" stroke="#2f75b5" strokeWidth="3" />
          <path d="M36 18V22M36 32V36M27 27H31M41 27H45" stroke="#2f75b5" strokeWidth="2.4" />
        </MenuDoc>
      }>From <u>O</u>ther Sources</MenuRow>
      <div className="h-px bg-[#e2e2e2] ml-[55px]" />
      <MenuRow h="h-[46px]" pt="pt-[5px]" icon={
        <svg width="50" height="38" viewBox="0 0 51 38" className="shrink-0 mt-[-5px]">
          <g transform="translate(5,0)"><rect x="0.5" y="0.5" width="28" height="24" fill="#fff" stroke="#a8a8a8" /><rect x="0" y="0" width="29" height="5" fill="#3f6fa8" /></g>
          <g transform="translate(14,5)"><rect x="0.5" y="0.5" width="28" height="28" fill="#fff" stroke="#a8a8a8" /><rect x="0" y="0" width="29" height="5" fill="#3f6fa8" /><path d="M10 5V29M20 5V29M0 13H29M0 21H29" stroke="#b5b5b5" /></g>
          <path d="M7 26C7 33 12 33 19 33" fill="none" stroke="#2f75b5" strokeWidth="3" />
          <path d="M15 26L22 33L15 38" fill="none" stroke="#2f75b5" strokeWidth="3" />
        </svg>
      }>Combine <u>Q</u>ueries</MenuRow>
      <div className="h-px bg-[#e2e2e2]" />
      <MenuRow h="h-[31px]" arrow={false} bold={false} icon={
        <svg width="39" height="19" viewBox="0 0 39 19" className="shrink-0">
          <g transform="translate(5,0)"><rect x="0.5" y="0.5" width="17" height="17" fill="#fff" stroke="#888" /><rect x="0" y="0" width="18" height="4" fill="#4a6f9a" /><path d="M6 4V18M12 4V18M0 9H18M0 13H18" stroke="#aaa" /><path d="M7 16L18 5" stroke="#3f7fc1" strokeWidth="2.2" /></g>
        </svg>
      }><u>L</u>aunch Power Query Editor...</MenuRow>
      <div className="h-px bg-[#e2e2e2] ml-[40px]" />
      <MenuRow h="h-[35px]" arrow={false} bold={false} icon={
        <svg width="39" height="20" viewBox="0 0 39 20" className="shrink-0">
          <g transform="translate(7,0)"><DocBase w={14} h={19} /></g>
          <circle cx="21" cy="14" r="3.5" fill="none" stroke="#e07b2e" strokeWidth="2.4" />
          <path d="M21 8.5V10M21 18V19.5M15.5 14H17M25 14H26.5" stroke="#e07b2e" strokeWidth="2" />
        </svg>
      }>Data Source <u>S</u>ettings...</MenuRow>
      <MenuRow h="h-[27px]" arrow={false} bold={false} icon={
        <svg width="39" height="19" viewBox="0 0 39 19" className="shrink-0">
          <g transform="translate(7,0)"><DocBase w={15} h={19} /><path d="M3 8H5M7 8H12M3 11H5M7 11H12M3 14H5M7 14H12" stroke="#999" /></g>
        </svg>
      }>Query O<u>p</u>tions</MenuRow>
    </div>
  );
}

export default function App() {
  return (
    <div className={`w-[1600px] h-[900px] overflow-hidden relative bg-white ${FONT}`}>
      <div className="bg-[#217346] h-[80px]">
        <TitleBar />
        <TabsRow />
      </div>
      <Ribbon />
      <FormulaBar />
      <Sheet />
      <SheetTabs />
      <StatusBar />
      <GetDataMenu />
      <div className="absolute left-[3px] top-[83px] w-[74px] h-[94px] border-[3px] border-[#e2101c]" />
      <div className="absolute left-[417px] top-[34px] w-[84px] h-[51px] border-[3px] border-[#e2101c]" />
    </div>
  );
}
